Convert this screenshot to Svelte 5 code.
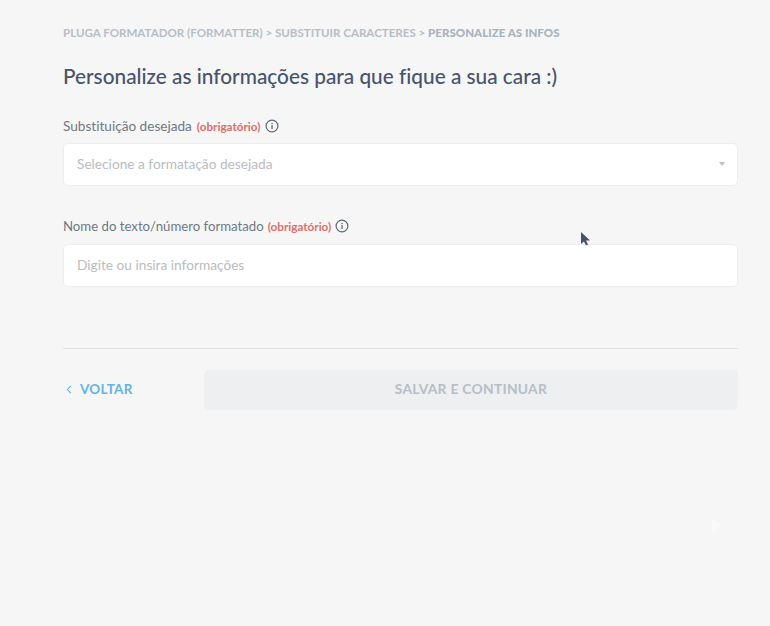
<script>
	const crumbs = "PLUGA FORMATADOR (FORMATTER) > SUBSTITUIR CARACTERES > ";
</script>

<main>
	<p class="crumbs">{crumbs}<b>PERSONALIZE AS INFOS</b></p>
	<h1>Personalize as informações para que fique a sua cara :)</h1>

	<div class="field first">
		<label for="format">Substituição desejada <em>(obrigatório)</em>
			<svg class="info" viewBox="0 0 14 14" width="14" height="14">
				<circle cx="7" cy="7" r="5.9" fill="none" stroke="#5d6778" stroke-width="1.2" />
				<rect x="6.4" y="6.2" width="1.3" height="3.8" fill="#5d6778" />
				<rect x="6.4" y="3.9" width="1.3" height="1.3" fill="#5d6778" />
			</svg>
		</label>
		<div class="box select" id="format">
			<span>Selecione a formatação desejada</span>
			<i class="caret"></i>
		</div>
	</div>

	<div class="field second">
		<label for="name">Nome do texto/número formatado <em>(obrigatório)</em>
			<svg class="info" viewBox="0 0 14 14" width="14" height="14">
				<circle cx="7" cy="7" r="5.9" fill="none" stroke="#5d6778" stroke-width="1.2" />
				<rect x="6.4" y="6.2" width="1.3" height="3.8" fill="#5d6778" />
				<rect x="6.4" y="3.9" width="1.3" height="1.3" fill="#5d6778" />
			</svg>
		</label>
		<input id="name" class="box" type="text" placeholder="Digite ou insira informações" />
	</div>

	<hr />

	<div class="actions">
		<a class="back" href="#voltar">
			<svg viewBox="0 0 6 10" width="6" height="9"><path d="M5 1 1.2 5 5 9" fill="none" stroke="#63b3e3" stroke-width="1.2" /></svg>
			VOLTAR
		</a>
		<button disabled>SALVAR E CONTINUAR</button>
	</div>

	<!-- mouse pointers caught in the screenshot -->
	<svg class="pointer dark" viewBox="0 0 12 16" width="12" height="16"><path d="M1 1v12l3-2.6 2 4 2-1-2-3.8h4z" fill="#47536b" /></svg>
	<svg class="pointer ghost" viewBox="0 0 12 16" width="12" height="16"><path d="M1 1v14l10-8z" fill="#f9f9f8" /></svg>
</main>

<style>
:global(body) {
	margin: 0;
	background: #f6f6f6;
}

main {
	position: relative;
	box-sizing: border-box;
	height: 626px;
	padding: 26px 32px 0 63px;
	font-family: Lato, "Open Sans", sans-serif;
	font-variant-ligatures: none;
	color: #4a5568;
	overflow: hidden;
}

.crumbs {
	margin: 0;
	font-size: 11.55px;
	line-height: 14px;
	font-weight: 700;
	color: #b5bec8;
}

.crumbs b {
	color: #a9b3bf;
}

h1 {
	margin: 21px 0 0;
	font-size: 20.8px;
	line-height: 30px;
	font-weight: 500;
	color: #47536b;
}

.first {
	margin-top: 26px;
}

.second {
	margin-top: 31px;
}

label {
	display: flex;
	align-items: center;
	gap: 5px;
	height: 18px;
	margin-bottom: 8px;
	font-size: 13.6px;
	color: #6f7885;
}

.second label {
	gap: 4px;
	margin-bottom: 9px;
	font-size: 13.2px;
}

em {
	font-style: normal;
	font-weight: 700;
	font-size: 11.7px;
	color: #d9706a;
}

.info {
	margin-left: 0;
}

.box {
	display: block;
	box-sizing: border-box;
	width: 100%;
	height: 43px;
	padding: 0 13px 2px;
	background: #fff;
	border: 1px solid #edeeef;
	border-radius: 5px;
	font-family: inherit;
	font-variant-ligatures: none;
	font-size: 13.7px;
}

.select {
	display: flex;
	align-items: center;
	justify-content: space-between;
	color: #b9bcc0;
}

.caret {
	width: 0;
	height: 0;
	margin-right: -1px;
	border-left: 3.5px solid transparent;
	border-right: 3.5px solid transparent;
	border-top: 4px solid #bcc1c6;
}

input::placeholder {
	color: #b9bcc0;
	opacity: 1;
}

hr {
	height: 1px;
	margin: 61px 0 21px;
	border: 0;
	background: #e0e1e2;
}

.actions {
	display: flex;
	align-items: center;
}

.back {
	display: flex;
	align-items: center;
	gap: 8px;
	width: 141px;
	padding: 0 0 2px 3px;
	box-sizing: border-box;
	font-size: 13.5px;
	font-weight: 700;
	letter-spacing: 0.3px;
	color: #63b3e3;
	text-decoration: none;
}

button {
	flex: 1;
	height: 40px;
	padding: 0 0 3px;
	border: 0;
	border-radius: 5px;
	background: #eeeff1;
	font-family: inherit;
	font-size: 13.8px;
	font-weight: 700;
	letter-spacing: 0.3px;
	color: #b5bec8;
}

.pointer {
	position: absolute;
}

.dark {
	left: 580px;
	top: 231px;
}

.ghost {
	left: 711px;
	top: 518px;
}
</style>
